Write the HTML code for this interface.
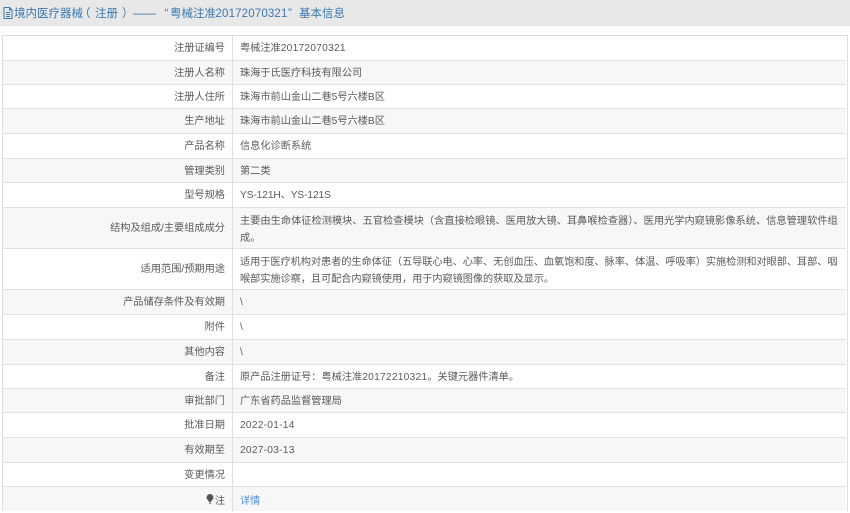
<!DOCTYPE html>
<html lang="zh"><head><meta charset="utf-8"><style>
html,body{margin:0;padding:0;width:850px;height:513px;overflow:hidden;background:#fff}
body{position:relative;font-family:"Liberation Sans","Noto Sans CJK SC",sans-serif;font-size:10.2px;color:#5a5a5a}
#w{position:absolute;left:0;top:0;width:850px;height:513px;filter:blur(.3px)}
.head{position:absolute;left:0;top:0;width:850px;height:26px;background:#e8e8e8}
.t{position:absolute;top:5.500px;line-height:16px;font-size:11.500px;color:#3a78b0;white-space:nowrap}
.ic{position:absolute;left:3px;top:7px}
.r{position:absolute;left:2px;width:844px;box-sizing:border-box;border-top:1px solid #e1e1e1}
.g{background:#f7f7f7}
.l{position:absolute;left:0;width:223px;text-align:right;white-space:nowrap;top:0;bottom:3px;display:flex;align-items:center;justify-content:flex-end}
.v{position:absolute;left:238px;width:603px;white-space:nowrap;line-height:17px;top:4px}
.d{top:4.500px}
.n{letter-spacing:.25px}
.vl{position:absolute;left:232px;top:35px;width:1px;height:476px;background:#dedede}
.bl,.br{position:absolute;top:35px;width:1.500px;height:476px;background:#dedede}
.bl{left:1.500px}.br{left:846.500px}
.tp{position:absolute;left:2px;top:35px;width:845px;height:1px;background:#dcdcdc}
.a{color:#4a90e2}
</style></head><body><div id="w">
<div class="head"></div>
<svg class="ic" width="10" height="12" viewBox="0 0 10 12"><path d="M1 .5H6.500L9 3V11.500H1Z M6.500 .5V3H9 M3 5.500H7 M3 7.500H7 M3 9.500H7" fill="none" stroke="#3a78b0" stroke-width="1"/></svg>
<div class="t" style="left:14px">境内医疗器械</div>
<div class="t" style="left:79px">（</div>
<div class="t" style="left:95px">注册</div>
<div class="t" style="left:122px">）</div>
<div class="t" style="left:133px">——</div>
<div class="t" style="left:164.500px">“</div>
<div class="t" style="left:170px">粤械注准</div>
<div class="t" style="left:215.500px;letter-spacing:.15px">20172070321</div>
<div class="t" style="left:288px">”</div>
<div class="t" style="left:299px">基本信息</div>

<div class="r" style="top:35px;height:25px"><div class="l">注册证编号</div><div class="v">粤械注准<span class="n">20172070321</span></div></div>
<div class="r g" style="top:60px;height:24px"><div class="l">注册人名称</div><div class="v">珠海于氏医疗科技有限公司</div></div>
<div class="r" style="top:84px;height:24px"><div class="l">注册人住所</div><div class="v">珠海市前山金山二巷5号六楼B区</div></div>
<div class="r g" style="top:108px;height:25px"><div class="l">生产地址</div><div class="v">珠海市前山金山二巷5号六楼B区</div></div>
<div class="r" style="top:133px;height:25px"><div class="l">产品名称</div><div class="v">信息化诊断系统</div></div>
<div class="r g" style="top:158px;height:24px"><div class="l">管理类别</div><div class="v">第二类</div></div>
<div class="r" style="top:182px;height:25px"><div class="l">型号规格</div><div class="v" style="letter-spacing:-.1px">YS-121H、YS-121S</div></div>
<div class="r g" style="top:207px;height:41px"><div class="l">结构及组成/主要组成成分</div><div class="v d" style="letter-spacing:.03px">主要由生命体征检测模块、五官检查模块（含直接检眼镜、医用放大镜、耳鼻喉检查器）、医用光学内窥镜影像系统、信息管理软件组<br>成。</div></div>
<div class="r" style="top:248px;height:41px"><div class="l">适用范围/预期用途</div><div class="v d" style="letter-spacing:-.06px">适用于医疗机构对患者的生命体征（五导联心电、心率、无创血压、血氧饱和度、脉率、体温、呼吸率）实施检测和对眼部、耳部、咽<br>喉部实施诊察，且可配合内窥镜使用，用于内窥镜图像的获取及显示。</div></div>
<div class="r g" style="top:289px;height:25px"><div class="l">产品储存条件及有效期</div><div class="v">\</div></div>
<div class="r" style="top:314px;height:25px"><div class="l">附件</div><div class="v">\</div></div>
<div class="r g" style="top:339px;height:25px"><div class="l">其他内容</div><div class="v">\</div></div>
<div class="r" style="top:364px;height:24px"><div class="l">备注</div><div class="v">原产品注册证号：粤械注准<span class="n">20172210321</span>。关键元器件清单。</div></div>
<div class="r g" style="top:388px;height:24px"><div class="l">审批部门</div><div class="v">广东省药品监督管理局</div></div>
<div class="r" style="top:412px;height:25px"><div class="l">批准日期</div><div class="v n">2022-01-14</div></div>
<div class="r g" style="top:437px;height:25px"><div class="l">有效期至</div><div class="v n">2027-03-13</div></div>
<div class="r" style="top:462px;height:24px"><div class="l">变更情况</div></div>
<div class="r g" style="top:486px;height:25px"><div class="l" style="bottom:0"><svg width="8" height="10" viewBox="0 0 8 10" style="margin-right:1px"><path d="M4 0A3.500 3.500 0 0 1 7.500 3.500C7.500 5.500 5.500 6 5 8H3C2.500 6 .5 5.500 .5 3.500A3.500 3.500 0 0 1 4 0Z" fill="#555"/><rect x="3" y="8.500" width="2" height="1.500" fill="#888"/></svg>注</div><div class="v a" style="top:6px">详情</div></div>

<div class="vl"></div><div class="bl"></div><div class="br"></div><div class="tp"></div>
</div></body></html>
